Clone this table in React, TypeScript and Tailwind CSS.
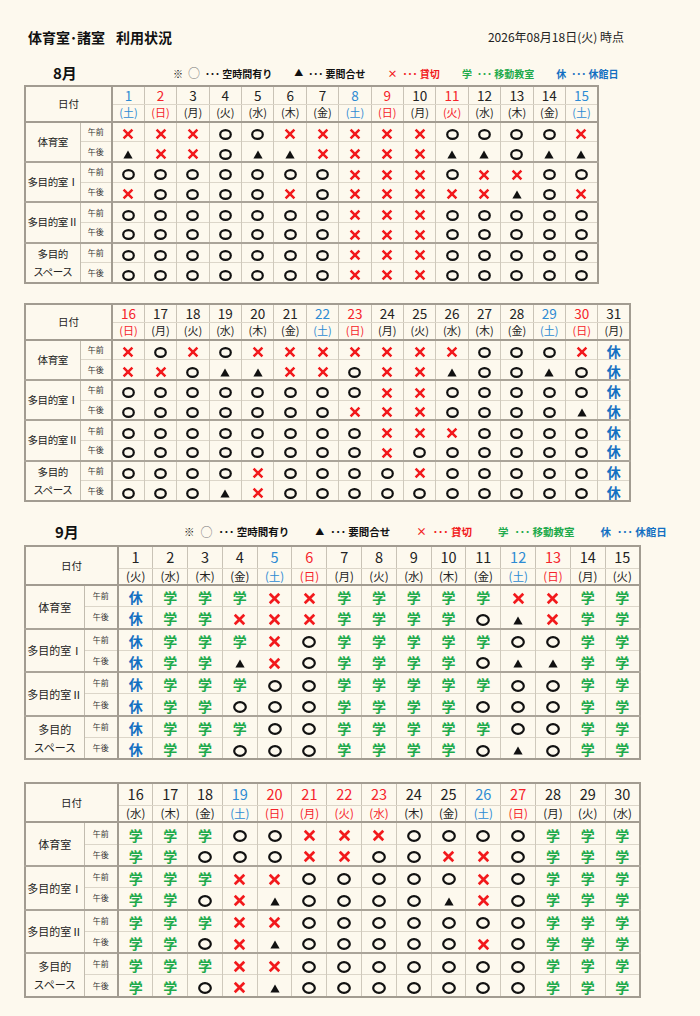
import React from "react";

type Day = { d: number; w: string; c: string };
type Variant = "aug" | "sep";

const FONT = "font-['Noto_Sans_CJK_JP','Noto_Sans',sans-serif]";

function mkDays(start: number, weekdays: string, colors: string): Day[] {
	return Array.from(weekdays).map((w, i) => ({ d: start + i, w, c: colors[i] }));
}

const aug1 = mkDays(1, "土日月火水木金土日月火水木金土", "br.....br.r...b");
const aug2 = mkDays(16, "日月火水木金土日月火水木金土日月", "r.....br.....br.");
const sep1 = mkDays(1, "火水木金土日月火水木金土日月火", "....br.....br..");
const sep2 = mkDays(16, "水木金土日月火水木金土日月火水", "...brrrr..br...");

const groups = ["体育室", "多目的室Ⅰ", "多目的室Ⅱ", "多目的\nスペース"];

// o:空き x:貸切 t:要問合せ g:移動教室 k:休館日
const aug1Rows = [
	"x x x o o x x x x x o o o o x",
	"t x x o t t x x x x t t o t t",
	"o o o o o o o x x x o x x o o",
	"x o o o o x o x x x x x t o x",
	"o o o o o o o x x x o o o o o",
	"o o o o o o o x x x o o o o o",
	"o o o o o o o x x x o o o o o",
	"o o o o o o o x x x o o o o o",
];
const aug2Rows = [
	"x o x o x x x x x x x o o o x k",
	"x x o t t x x o x x t o o t o k",
	"o o o o o o o o x x o o o o o k",
	"o o o o o o o x x x o o o o t k",
	"o o o o o o o o x x x o o o o k",
	"o o o o o o o o x o o o o o o k",
	"o o o o x o o o o x o o o o o k",
	"o o o t x o o o o o o o o o o k",
];
const sep1Rows = [
	"k g g g x x g g g g g x x g g",
	"k g g x x x g g g g o t x g g",
	"k g g g x o g g g g g o o g g",
	"k g g t x o g g g g o t t g g",
	"k g g g o o g g g g g o o g g",
	"k g g o o o g g g g o o o g g",
	"k g g g o o g g g g g o o g g",
	"k g g o o o g g g g o t o g g",
];
const sep2Rows = [
	"g g g o o x x x o o o o g g g",
	"g g o o o x x o o x x o g g g",
	"g g g x x o o o o o x o g g g",
	"g g o x t o o o o t x o g g g",
	"g g g x x o o o o o o o g g g",
	"g g o x t o o o o o x o g g g",
	"g g g x x o o o o o o o g g g",
	"g g o x t o o o o o o o g g g",
];

function Mark({ m, big }: { m: string; big: boolean }) {
	if (m === "o") {
		const w = big ? 14 : 13;
		const h = big ? 12 : 11;
		return (
			<svg width={w} height={h} viewBox={`0 0 ${w} ${h}`} className="inline-block align-middle">
				<ellipse cx={w / 2} cy={h / 2} rx={w / 2 - 1.2} ry={h / 2 - 1.1} fill="none" stroke="#111" strokeWidth="2.2" />
			</svg>
		);
	}
	if (m === "x") {
		const s = big ? 13 : 12;
		return (
			<svg width={s} height={s} viewBox="0 0 12 12" className="inline-block align-middle">
				<path d="M1.6 1.6L10.4 10.4M10.4 1.6L1.6 10.4" stroke="#f2191c" strokeWidth="2.5" />
			</svg>
		);
	}
	if (m === "t") {
		return (
			<svg width={10} height={9} viewBox="0 0 10 9" className="inline-block align-middle">
				<path d="M5 0.5L9.6 8.6H0.4Z" fill="#111" />
			</svg>
		);
	}
	if (m === "g") {
		return <span className="font-bold text-[14px] leading-none text-[#1eaa4b]">学</span>;
	}
	return <span className="font-bold text-[14px] leading-none text-[#1470c2]">休</span>;
}

function dayColor(c: string) {
	if (c === "r") return "text-[#f5232a]";
	if (c === "b") return "text-[#2d8bd3]";
	return "text-[#222]";
}

function UsageTable({ days, rows, variant }: { days: Day[]; rows: string[]; variant: Variant }) {
	const big = variant === "sep";
	const groupW = big ? "w-[59px]" : "w-[55px]";
	const subW = big ? "w-[34px]" : "w-[32px]";
	const dayW = big ? "w-[34.8px]" : "w-[32.4px]";
	const numRow = big ? "h-[22px]" : "h-[18.5px]";
	const wdRow = big ? "h-[17px]" : "h-[17px]";
	const bodyRow = big ? "h-[21.8px]" : "h-[20.2px]";
	const numText = big ? "text-[14.5px]" : "text-[13.5px]";
	const wdText = big ? "text-[11.5px]" : "text-[11px]";
	const groupText = big ? "text-[11px]" : "text-[10.5px] tracking-[-0.4px]";

	return (
		<table className="table-fixed border-collapse border-2 border-[#a29c91] bg-[#fdf9ee]">
			<colgroup>
				<col className={groupW} />
				<col className={subW} />
				{days.map((d) => (
					<col key={d.d} className={dayW} />
				))}
			</colgroup>
			<thead>
				<tr className={numRow}>
					<th
						colSpan={2}
						rowSpan={2}
						className="border-r-2 border-b-2 border-[#a29c91] text-[10.5px] font-normal text-[#222]"
					>
						日付
					</th>
					{days.map((d) => (
						<th
							key={d.d}
							className={`border-l border-b border-l-[#c9c3b6] border-b-[#dcd6c9] p-0 font-normal leading-none ${numText} ${dayColor(d.c)}`}
						>
							{d.d}
						</th>
					))}
				</tr>
				<tr className={wdRow}>
					{days.map((d) => (
						<th
							key={d.d}
							className={`border-l border-b-2 border-l-[#c9c3b6] border-b-[#a29c91] p-0 font-normal leading-none ${wdText} ${dayColor(d.c)}`}
						>
							({d.w})
						</th>
					))}
				</tr>
			</thead>
			<tbody>
				{rows.map((r, i) => {
					const first = i % 2 === 0;
					const marks = r.split(" ");
					return (
						<tr
							key={i}
							className={`${bodyRow} ${first && i > 0 ? "border-t-2 border-[#aaa499]" : "border-t border-[#dcd6c9]"}`}
						>
							{first && (
								<td
									rowSpan={2}
									className={`border-r border-[#c2bcaf] p-0 text-center leading-[18px] whitespace-pre text-[#222] ${groupText}`}
								>
									{groups[i / 2]}
								</td>
							)}
							<td className="border-r-2 border-[#a29c91] p-0 text-center text-[8px] text-[#333]">
								{first ? "午前" : "午後"}
							</td>
							{marks.map((m, j) => (
								<td key={j} className="border-l border-[#cfc9bc] p-0 text-center leading-none">
									<Mark m={m} big={big} />
								</td>
							))}
						</tr>
					);
				})}
			</tbody>
		</table>
	);
}

function MonthRow({ month, variant }: { month: string; variant: Variant }) {
	const big = variant === "sep";
	const inner = big ? "gap-[6px]" : "gap-[5px]";
	return (
		<div className={`flex items-center h-[20px] font-bold ${big ? "pl-[55px]" : "pl-[53px]"}`}>
			<span className={`text-[15px] text-[#111] ${big ? "w-[129px]" : "w-[120px]"}`}>{month}</span>
			<div className={`flex items-center ${big ? "gap-[26px] text-[10.5px]" : "gap-[22px] text-[10px]"}`}>
				<span className={`flex items-center ${inner} text-[#111]`}>
					<span className="font-normal">※</span>
					<span className="font-normal text-[12px] leading-none text-[#777]">○</span>
					<span>･･･ 空時間有り</span>
				</span>
				<span className={`flex items-center ${inner} text-[#111]`}>
					<span className="text-[9px]">▲</span>
					<span>･･･ 要問合せ</span>
				</span>
				<span className={`flex items-center ${inner} text-[#f2191c]`}>
					<span>×</span>
					<span>･･･ 貸切</span>
				</span>
				<span className={`flex items-center ${inner} text-[#1eaa4b]`}>
					<span>学</span>
					<span>･･･ 移動教室</span>
				</span>
				<span className={`flex items-center ${inner} text-[#1470c2]`}>
					<span>休</span>
					<span>･･･ 休館日</span>
				</span>
			</div>
		</div>
	);
}

export default function App() {
	return (
		<div className={`min-h-screen w-[700px] bg-[#fdf9ee] pt-[27px] pb-[18px] ${FONT}`}>
			{/* タイトル行 */}
			<div className="flex items-center justify-between h-[20px] pl-[28px] pr-[76px]">
				<h1 className="flex gap-[11px] text-[14px] font-bold text-[#111]">
					<span>体育室･諸室</span>
					<span>利用状況</span>
				</h1>
				<span className="text-[12px] text-[#222]">2026年08月18日(火) 時点</span>
			</div>

			{/* 8月 */}
			<div className="mt-[16px]">
				<MonthRow month="8月" variant="aug" />
			</div>
			<div className="mt-[2px] ml-[24px] flex flex-col gap-[19px] items-start">
				<UsageTable days={aug1} rows={aug1Rows} variant="aug" />
				<UsageTable days={aug2} rows={aug2Rows} variant="aug" />
			</div>

			{/* 9月 */}
			<div className="mt-[20px]">
				<MonthRow month="9月" variant="sep" />
			</div>
			<div className="mt-[3px] ml-[24px] flex flex-col gap-[22px] items-start">
				<UsageTable days={sep1} rows={sep1Rows} variant="sep" />
				<UsageTable days={sep2} rows={sep2Rows} variant="sep" />
			</div>
		</div>
	);
}
